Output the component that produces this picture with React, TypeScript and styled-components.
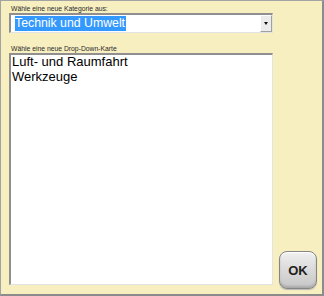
import React from "react";
import styled, { createGlobalStyle } from "styled-components";

const Global = createGlobalStyle`
  html, body { margin: 0; padding: 0; background: #f8efc1; }
  * { box-sizing: border-box; }
`;

const Panel = styled.div`
  width: 324px;
  height: 296px;
  background: #f8efc1;
  border-style: solid;
  border-color: #a3a3a3 #8c8c8c #8c8c8c #a3a3a3;
  border-width: 1px 2px 2px 1px;
  padding: 3px 0 0 8px;
  display: grid;
  grid-template-columns: 264px 38px;
  column-gap: 6px;
  font-family: "Liberation Sans", Arial, sans-serif;
`;

const Column = styled.div`
  display: flex;
  flex-direction: column;
`;

const Label = styled.div<{ $gap?: number }>`
  font-size: 6.8px;
  line-height: 9px;
  height: 9px;
  color: #2a2a2a;
  padding-left: 2px;
  margin-top: ${(p) => p.$gap ?? 0}px;
  white-space: nowrap;
`;

const Select = styled.div`
  height: 20px;
  background: #fff;
  border-style: solid;
  border-width: 2px 1px 1px 2px;
  border-color: #8f8f8f #e3e3e3 #e3e3e3 #8f8f8f;
  display: flex;
  align-items: stretch;
  padding-left: 4px;
`;

const Selected = styled.div`
  flex: 1;
  display: flex;
  align-items: center;
`;

const Highlight = styled.span`
  background: #3399ff;
  color: #fff;
  font-size: 12.3px;
  line-height: 15px;
  height: 15px;
  padding: 0 1px 0 0;
`;

const ArrowButton = styled.div`
  width: 12px;
  background: #ececec;
  border-style: solid;
  border-width: 1px;
  border-color: #ffffff #a0a0a0 #a0a0a0 #ffffff;
  display: flex;
  align-items: center;
  justify-content: center;
`;

const Arrow = styled.div`
  width: 0;
  height: 0;
  border-left: 2px solid transparent;
  border-right: 2px solid transparent;
  border-top: 3px solid #111;
`;

const ListBox = styled.div`
  height: 232px;
  background: #fff;
  border-style: solid;
  border-width: 2px 1px 1px 2px;
  border-color: #8f8f8f #e3e3e3 #e3e3e3 #8f8f8f;
  padding: 0 1px;
`;

const Item = styled.div`
  font-size: 13px;
  line-height: 14.5px;
  color: #000;
  white-space: nowrap;
`;

const Side = styled.div`
  display: flex;
  flex-direction: column;
  justify-content: flex-end;
  padding-bottom: 5px;
`;

const OkButton = styled.div`
  width: 38px;
  height: 38px;
  border-radius: 8px;
  border: 1px solid #858585;
  background: linear-gradient(#f0f0f0 0%, #dcdcdc 45%, #c6c6c6 100%);
  box-shadow: inset 0 1px 1px #ffffff, inset 0 -2px 2px #aaaaaa, 0 1px 1px #b8b8b8;
  display: flex;
  align-items: center;
  justify-content: center;
  font-weight: bold;
  font-size: 13px;
  color: #1e1e1e;
`;

export default function App() {
  return (
    <>
      <Global />
      <Panel>
        <Column>
          <Label>Wähle eine neue Kategorie aus:</Label>
          <Select>
            <Selected>
              <Highlight>Technik und Umwelt</Highlight>
            </Selected>
            <ArrowButton>
              <Arrow />
            </ArrowButton>
          </Select>
          <Label $gap={11}>Wähle eine neue Drop-Down-Karte</Label>
          <ListBox>
            <Item>Luft- und Raumfahrt</Item>
            <Item>Werkzeuge</Item>
          </ListBox>
        </Column>
        <Side>
          <OkButton>OK</OkButton>
        </Side>
      </Panel>
    </>
  );
}
